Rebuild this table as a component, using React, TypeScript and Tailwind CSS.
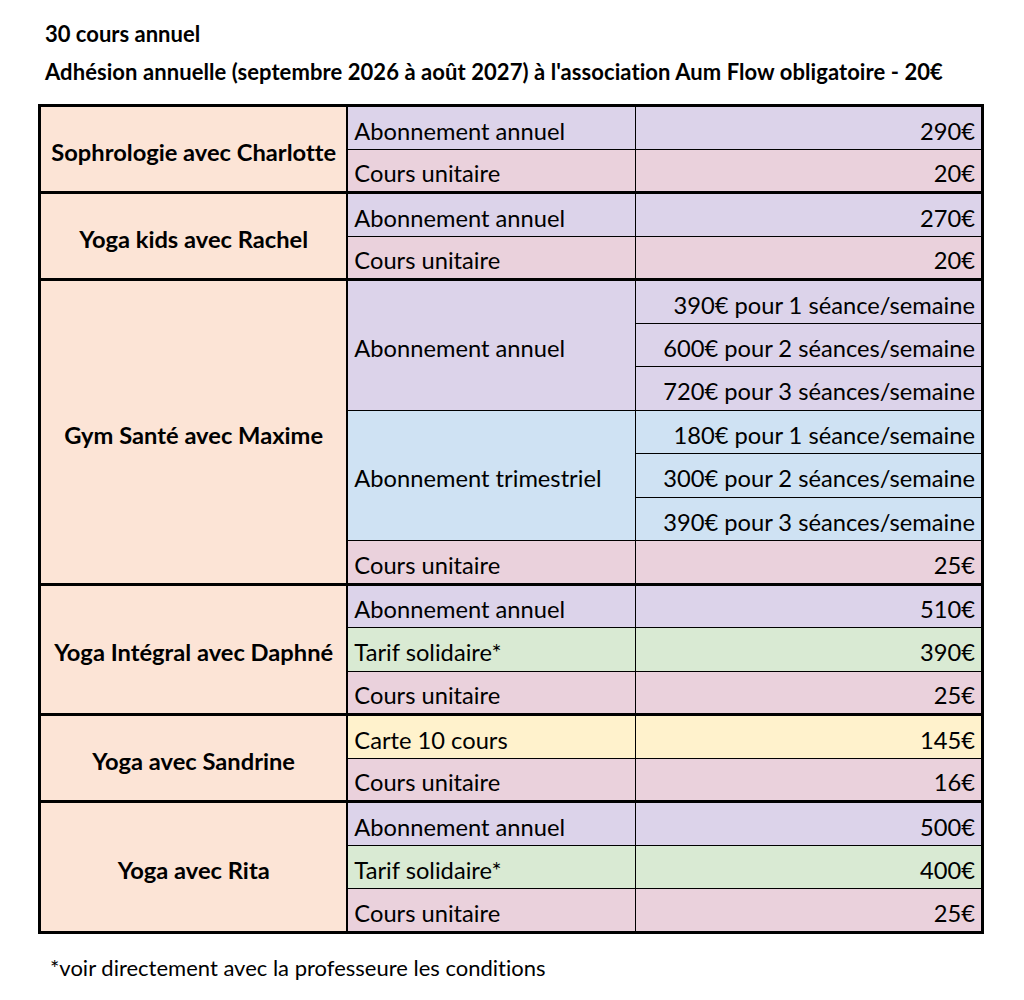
type Row = { label: string; price: string; bg: string; span?: number };
type Group = { name: string; rows: Row[] };

const PURPLE = "bg-[#dcd3ea]";
const PINK = "bg-[#ead1dc]";
const BLUE = "bg-[#cfe2f3]";
const GREEN = "bg-[#d9ead3]";
const YELLOW = "bg-[#fff2cc]";

const groups: Group[] = [
  {
    name: "Sophrologie avec Charlotte",
    rows: [
      { label: "Abonnement annuel", price: "290€", bg: PURPLE },
      { label: "Cours unitaire", price: "20€", bg: PINK },
    ],
  },
  {
    name: "Yoga kids avec Rachel",
    rows: [
      { label: "Abonnement annuel", price: "270€", bg: PURPLE },
      { label: "Cours unitaire", price: "20€", bg: PINK },
    ],
  },
  {
    name: "Gym Santé avec Maxime",
    rows: [
      { label: "Abonnement annuel", price: "390€ pour 1 séance/semaine", bg: PURPLE, span: 3 },
      { label: "", price: "600€ pour 2 séances/semaine", bg: PURPLE, span: 0 },
      { label: "", price: "720€ pour 3 séances/semaine", bg: PURPLE, span: 0 },
      { label: "Abonnement trimestriel", price: "180€ pour 1 séance/semaine", bg: BLUE, span: 3 },
      { label: "", price: "300€ pour 2 séances/semaine", bg: BLUE, span: 0 },
      { label: "", price: "390€ pour 3 séances/semaine", bg: BLUE, span: 0 },
      { label: "Cours unitaire", price: "25€", bg: PINK },
    ],
  },
  {
    name: "Yoga Intégral avec Daphné",
    rows: [
      { label: "Abonnement annuel", price: "510€", bg: PURPLE },
      { label: "Tarif solidaire*", price: "390€", bg: GREEN },
      { label: "Cours unitaire", price: "25€", bg: PINK },
    ],
  },
  {
    name: "Yoga avec Sandrine",
    rows: [
      { label: "Carte 10 cours", price: "145€", bg: YELLOW },
      { label: "Cours unitaire", price: "16€", bg: PINK },
    ],
  },
  {
    name: "Yoga avec Rita",
    rows: [
      { label: "Abonnement annuel", price: "500€", bg: PURPLE },
      { label: "Tarif solidaire*", price: "400€", bg: GREEN },
      { label: "Cours unitaire", price: "25€", bg: PINK },
    ],
  },
];

export default function App() {
  return (
    <div className="w-[1024px] h-[1000px] bg-white text-black font-['Lato','Liberation_Sans',sans-serif] [font-variant-ligatures:none]">
      <div className="pl-[45px] pt-[20px]">
        <p className="text-[22px] font-bold leading-[28px]">30 cours annuel</p>
        <p className="text-[22px] font-bold leading-[28px] mt-[10px] tracking-[0.07px]">
          Adhésion annuelle (septembre 2026 à août 2027) à l'association Aum Flow obligatoire - 20€
        </p>
      </div>

      <table className="ml-[38px] mt-[18px] w-[946px] border-collapse border-[3px] border-black text-[23.7px] leading-[30px]">
        <colgroup>
          <col className="w-[309px]" />
          <col className="w-[289px]" />
          <col className="w-[348px]" />
        </colgroup>
        {groups.map((g) => (
          <tbody key={g.name} className="border-[3px] border-black">
            {g.rows.map((r, i) => (
              <tr key={i} className="h-[43.5px]">
                {i === 0 && (
                  <td
                    rowSpan={g.rows.length}
                    className="bg-[#fce4d6] border-r-2 border-black text-center font-bold align-middle pt-[6px]"
                  >
                    {g.name}
                  </td>
                )}
                {r.span !== 0 && (
                  <td
                    rowSpan={r.span ?? 1}
                    className={`${r.bg} border border-black px-[6px] pt-[6px] align-middle`}
                  >
                    {r.label}
                  </td>
                )}
                <td className={`${r.bg} border border-black px-[6px] pt-[6px] text-right align-middle`}>
                  {r.price}
                </td>
              </tr>
            ))}
          </tbody>
        ))}
      </table>

      <p className="pl-[50px] mt-[20px] text-[22px] leading-[28px]">
        *voir directement avec la professeure les conditions
      </p>
    </div>
  );
}
